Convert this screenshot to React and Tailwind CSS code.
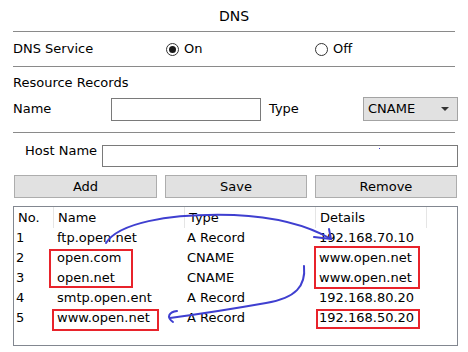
import React from "react";

const rows = [
  ["1", "ftp.open.net", "A Record", "192.168.70.10"],
  ["2", "open.com", "CNAME", "www.open.net"],
  ["3", "open.net", "CNAME", "www.open.net"],
  ["4", "smtp.open.ent", "A Record", "192.168.80.20"],
  ["5", "www.open.net", "A Record", "192.168.50.20"],
];

function Radio({ checked }) {
  return (
    <span className="w-[13px] h-[13px] rounded-full border border-[#333] bg-white flex items-center justify-center shrink-0">
      {checked && <span className="w-[7px] h-[7px] rounded-full bg-[#1a1a1a]" />}
    </span>
  );
}

function Btn({ children, w }) {
  return (
    <div className={`${w} h-[23px] bg-[#e1e1e1] border border-[#adadad] flex items-center justify-center`}>
      {children}
    </div>
  );
}

export default function App() {
  return (
    <div className="relative w-[468px] h-[352px] bg-white overflow-hidden font-['DejaVu_Sans',sans-serif] text-[13px] text-black leading-[16px]">
      <div className="h-[31px] flex items-center justify-center text-[14px] pt-[1px]">DNS</div>
      <div className="ml-[13px] w-[442px] h-px bg-[#8a8a8a]" />

      <div className="h-[34px] flex items-center pl-[13px]">
        <div className="w-[153px]">DNS Service</div>
        <div className="w-[149px] flex items-center gap-[5px]">
          <Radio checked />
          <span>On</span>
        </div>
        <div className="flex items-center gap-[5px]">
          <Radio />
          <span>Off</span>
        </div>
      </div>
      <div className="ml-[13px] w-[442px] h-px bg-[#8a8a8a]" />

      <div className="h-[30px] pt-[2px] flex items-center pl-[13px]">Resource Records</div>

      <div className="h-[24px] flex items-center pl-[13px]">
        <div className="w-[98px]">Name</div>
        <div className="w-[150px] h-[23px] border border-[#7a7a7a] bg-white" />
        <div className="w-[102px] pl-[8px]">Type</div>
        <div className="w-[95px] h-[24px] bg-[#e1e1e1] border border-[#a3a3a3] flex items-center justify-between pl-[4px] pr-[8px]">
          <span>CNAME</span>
          <svg width="8" height="5" viewBox="0 0 8 5"><path d="M0 0 L8 0 L4 4 Z" fill="#333" /></svg>
        </div>
      </div>

      <div className="mt-[11px] ml-[13px] w-[442px] h-px bg-[#8a8a8a]" />

      <div className="mt-[12px] h-[22px] flex items-start pl-[25px]">
        <div className="w-[77px] -mt-[2px]">Host Name</div>
        <div className="w-[356px] h-[22px] border border-[#7a7a7a] bg-white" />
      </div>

      <div className="mt-[8px] flex pl-[14px] gap-[8px]">
        <Btn w="w-[143px]">Add</Btn>
        <Btn w="w-[142px]">Save</Btn>
        <Btn w="w-[142px]">Remove</Btn>
      </div>

      <div className="mt-[8px] ml-[13px] w-[445px] h-[140px] border border-[#828790] bg-white">
        <div className="grid grid-cols-[40px_131px_131px_111px_1fr] h-[21px]">
          <div className="border-r border-[#e5e5e5] pl-[4px] flex items-center">No.</div>
          <div className="border-r border-[#e5e5e5] pl-[4px] flex items-center">Name</div>
          <div className="border-r border-[#e5e5e5] pl-[4px] flex items-center">Type</div>
          <div className="border-r border-[#e5e5e5] pl-[4px] flex items-center">Details</div>
          <div />
        </div>
        {rows.map((r) => (
          <div key={r[0]} className="grid grid-cols-[40px_131px_131px_111px_1fr] h-[20px]">
            <div className="pl-[2px] flex items-center">{r[0]}</div>
            <div className="pl-[3px] flex items-center">{r[1]}</div>
            <div className="pl-[2px] flex items-center">{r[2]}</div>
            <div className="pl-[3px] flex items-center">{r[3]}</div>
            <div />
          </div>
        ))}
      </div>

      <svg className="absolute inset-0 pointer-events-none" width="468" height="352" viewBox="0 0 468 352">
        <g fill="none" stroke="#e8232b" strokeWidth="2">
          <rect x="50" y="250" width="82" height="37" />
          <rect x="53" y="310" width="105" height="20" />
          <rect x="315" y="247" width="104" height="41" />
          <rect x="317" y="310" width="102" height="18" />
        </g>
        <g fill="none" stroke="#3f3fd0" strokeWidth="2" strokeLinecap="round" strokeLinejoin="round">
          <path d="M106 243 C 118 224 165 213 234 215 C 280 217 312 228 331 239" />
          <path d="M314 237 L331 239 L329 229" />
          <path d="M304 266 C 306 286 296 298 266 303 C 232 309 200 314 170 318" />
          <path d="M177 311 C 169 312 166 317 173 322" />
        </g>
        <rect x="379" y="148" width="1" height="1" fill="#3f3fd0" />
      </svg>
    </div>
  );
}
